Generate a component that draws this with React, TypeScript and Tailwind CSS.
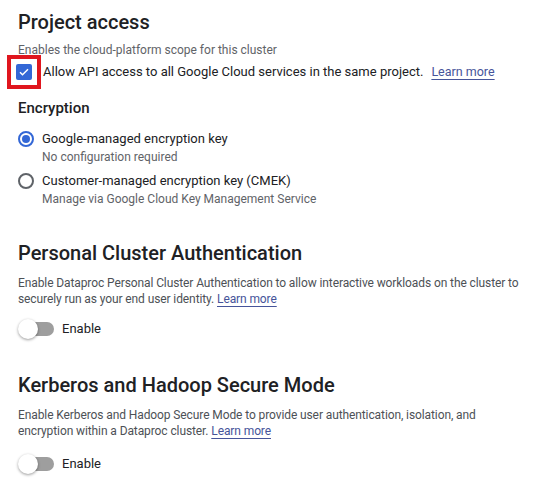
import React from 'react';

const LearnMore = () => (
  <a className="text-[#46549a] underline decoration-[#46549a] underline-offset-[3px] decoration-1 cursor-pointer">
    Learn more
  </a>
);

const Radio = ({ checked }: { checked?: boolean }) => (
  <span
    className={
      'flex h-[16px] w-[16px] shrink-0 items-center justify-center rounded-full border-2 ' +
      (checked ? 'border-[#3367d6]' : 'border-[#5f6368]')
    }
  >
    {checked && <span className="h-[8px] w-[8px] rounded-full bg-[#3367d6]" />}
  </span>
);

const Toggle = () => (
  <div className="flex items-center gap-[8px]">
    <div className="relative h-[20px] w-[36px]">
      <div className="absolute left-[4px] top-[3px] h-[14px] w-[32px] rounded-full bg-[#9e9e9e]" />
      <div className="absolute left-0 top-0 h-[20px] w-[20px] rounded-full bg-white shadow-[0_1px_3px_rgba(0,0,0,0.4)]" />
    </div>
    <span className="text-[13px] text-[#202124]">Enable</span>
  </div>
);

export default function App() {
  return (
    <div className="min-h-screen bg-white pl-[18px] pr-[8px] pt-[8px] font-['Roboto',sans-serif] text-[#202124]">
      <h2 className="text-[20px] font-medium leading-[28px]">Project access</h2>
      <p className="mt-[6px] text-[12px] leading-[16px] text-[#5f6368]">Enables the cloud-platform scope for this cluster</p>
      <div className="-mt-[3px] flex items-center">
        <div className="-ml-[11px] flex h-[34px] w-[34px] items-center justify-center border-[4px] border-[#e0161e]">
          <span className="flex h-[16px] w-[16px] items-center justify-center rounded-[2px] bg-[#3367d6]">
            <svg width="12" height="12" viewBox="0 0 24 24" fill="none" stroke="white" strokeWidth="3">
              <path d="M4 12.5l5 5L20 6.5" />
            </svg>
          </span>
        </div>
        <span className="ml-[2px] whitespace-nowrap text-[13px] leading-[20px]">
          Allow API access to all Google Cloud services in the same project.
        </span>
        <span className="ml-[8px] whitespace-nowrap text-[12.5px] leading-[20px]">
          <LearnMore />
        </span>
      </div>

      <h3 className="mt-[8px] text-[15px] font-medium leading-[22px]">Encryption</h3>
      <div className="mt-[10px] flex flex-col gap-[6px]">
        <div className="flex items-start gap-[8px]">
          <div className="mt-[2px]"><Radio checked /></div>
          <div>
            <div className="text-[13px] leading-[20px]">Google-managed encryption key</div>
            <div className="text-[12px] leading-[16px] text-[#5f6368]">No configuration required</div>
          </div>
        </div>
        <div className="flex items-start gap-[8px]">
          <div className="mt-[2px]"><Radio /></div>
          <div>
            <div className="text-[13px] leading-[20px]">Customer-managed encryption key (CMEK)</div>
            <div className="text-[12px] leading-[16px] text-[#5f6368]">Manage via Google Cloud Key Management Service</div>
          </div>
        </div>
      </div>

      <h2 className="mt-[32px] text-[20px] font-medium leading-[28px]">Personal Cluster Authentication</h2>
      <p className="mt-[8px] text-[12px] leading-[16px] tracking-[-0.1px] text-[#4d5156]">
        Enable Dataproc Personal Cluster Authentication to allow interactive workloads on the cluster to securely run as your end user identity. <LearnMore />
      </p>
      <div className="mt-[12px]"><Toggle /></div>

      <h2 className="mt-[32px] text-[20px] font-medium leading-[28px]">Kerberos and Hadoop Secure Mode</h2>
      <p className="mt-[8px] max-w-[480px] text-[12px] leading-[16px] tracking-[-0.1px] text-[#4d5156]">
        Enable Kerberos and Hadoop Secure Mode to provide user authentication, isolation, and encryption within a Dataproc cluster. <LearnMore />
      </p>
      <div className="mt-[15px]"><Toggle /></div>
    </div>
  );
}
